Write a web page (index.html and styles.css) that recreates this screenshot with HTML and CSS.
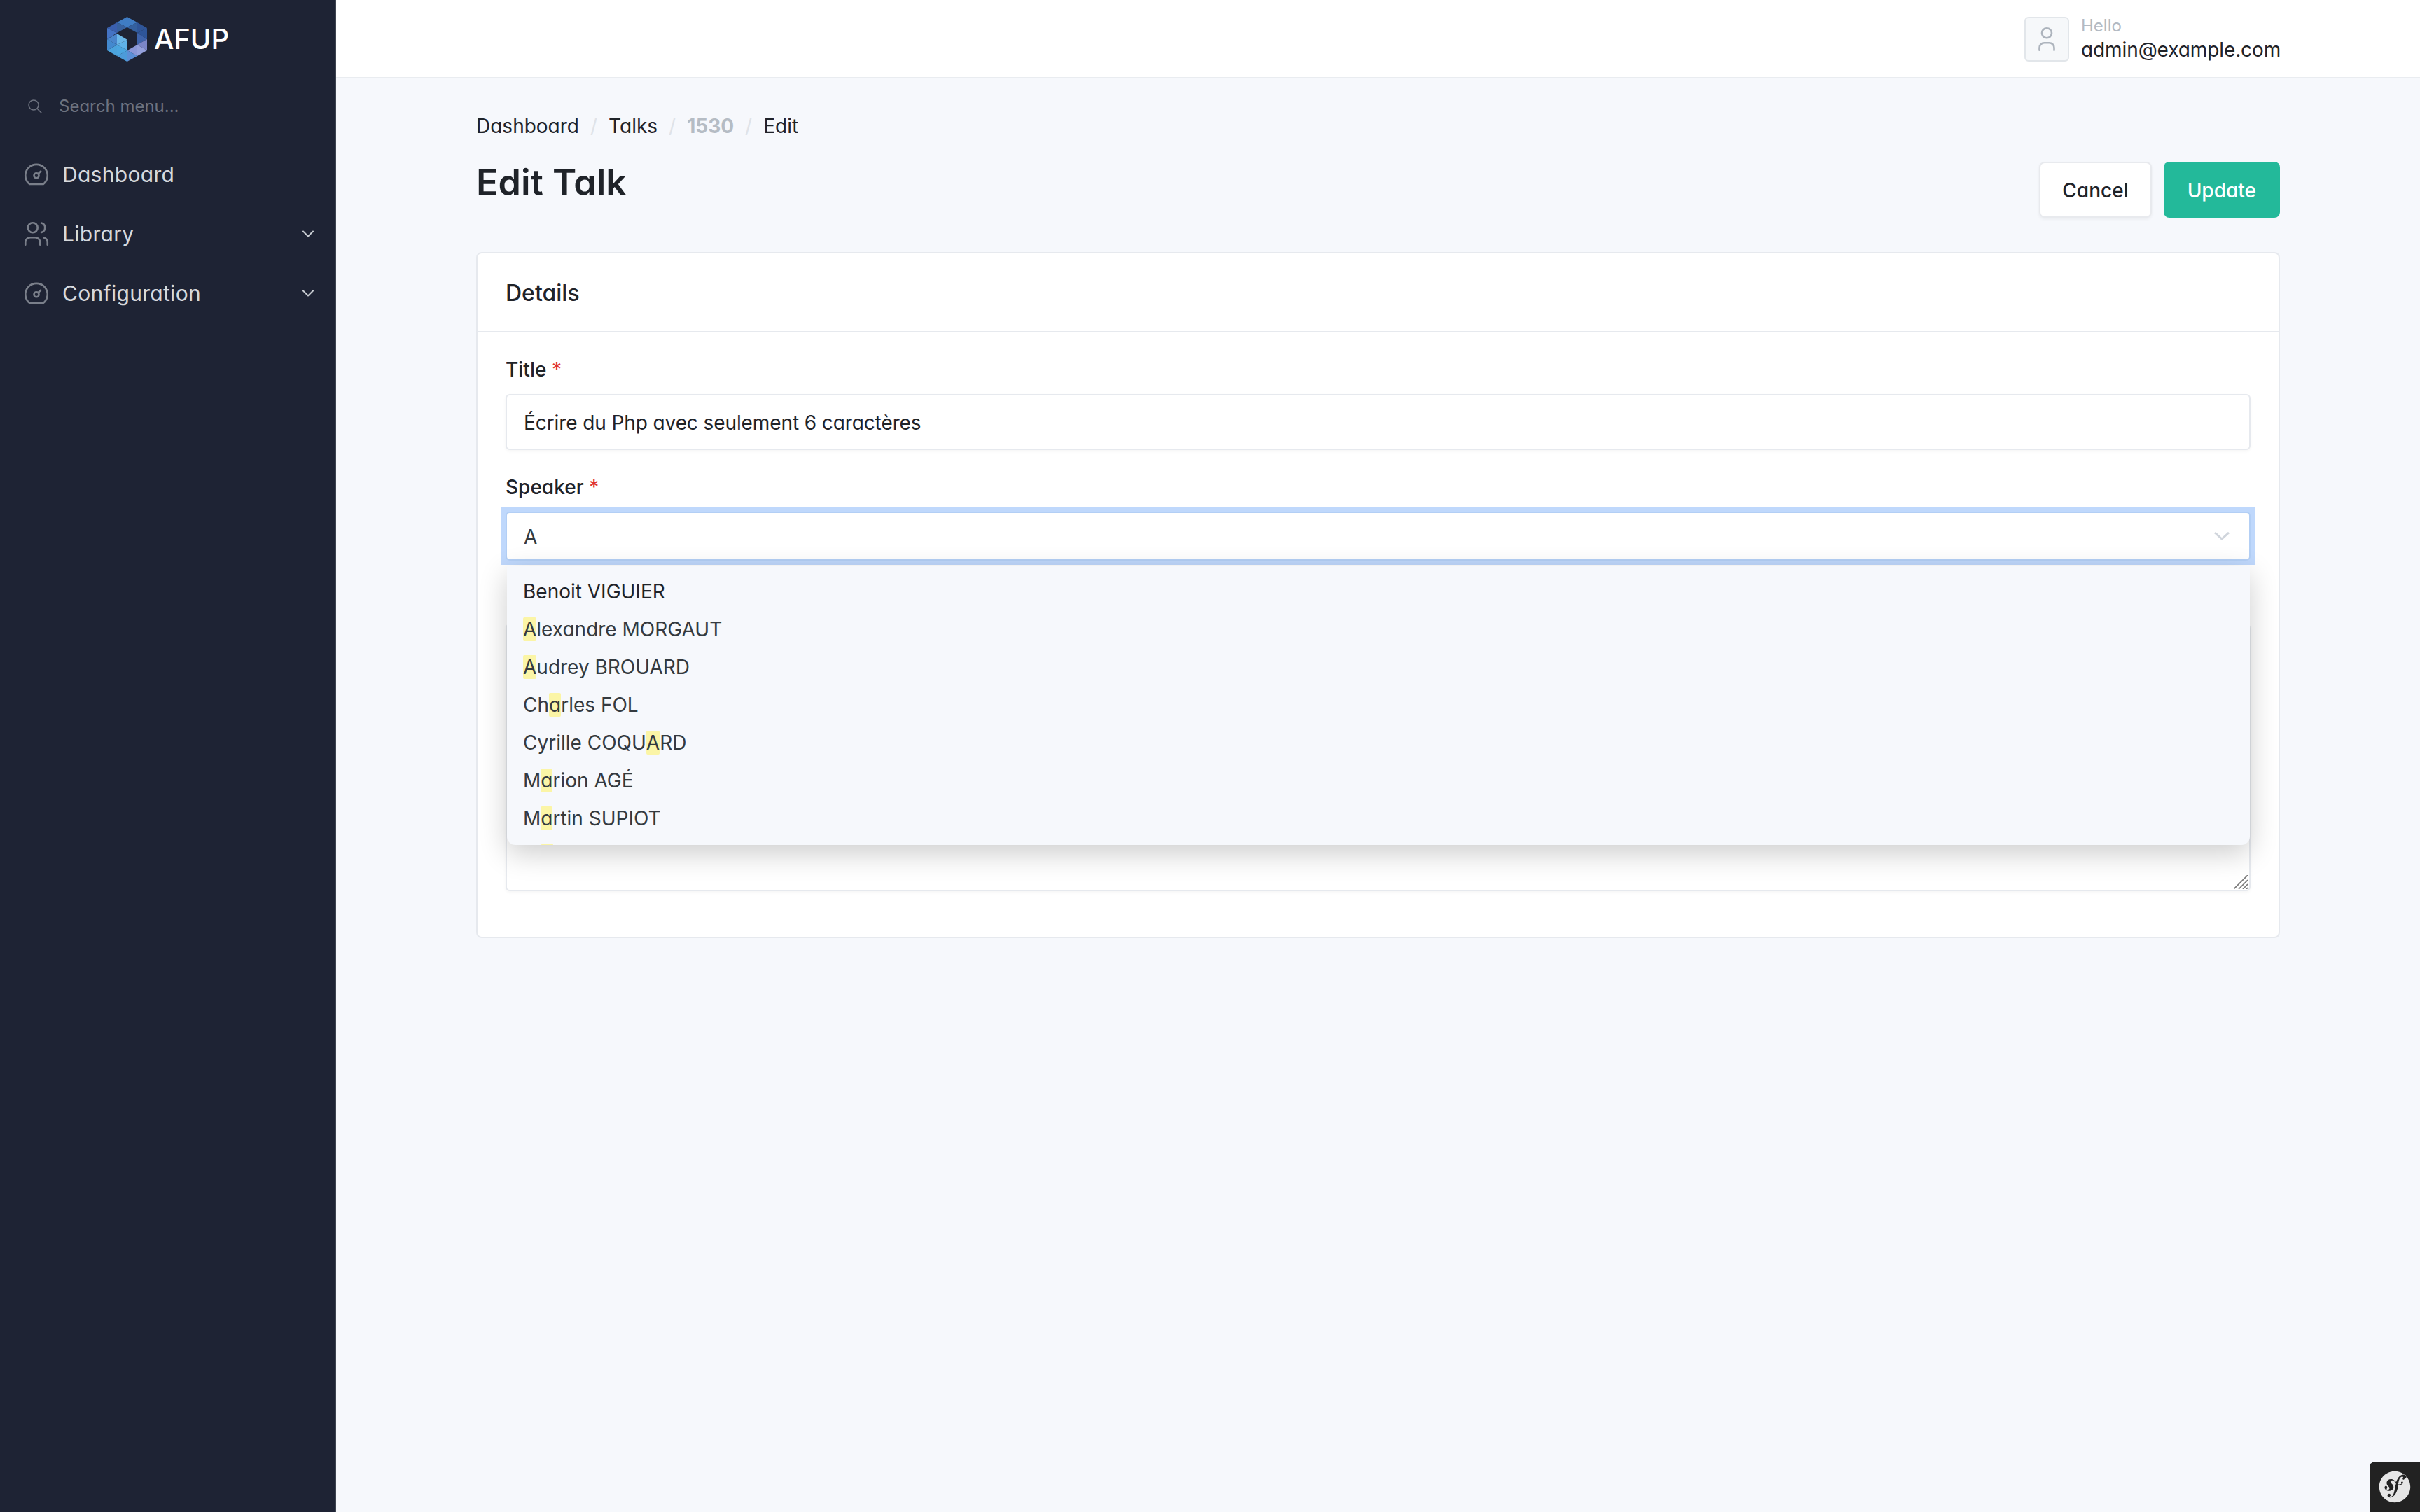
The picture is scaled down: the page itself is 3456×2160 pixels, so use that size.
FILE: index.html
```html
<!DOCTYPE html>
<html lang="en">
<head>
<meta charset="utf-8">
<title>Edit Talk</title>
<link rel="stylesheet" href="styles.css">
</head>
<body>
<aside class="sidebar">
  <div class="brand">
    <svg class="brand-logo" viewBox="0 0 57 64">
      <polygon fill="#3f7cc4" points="28.5,0 43,8 28.5,15 14,8"/>
      <polygon fill="#37619f" points="14,8 28.5,15 14,23"/>
      <polygon fill="#3a5fae" points="14,8 14,23 0,16"/>
      <polygon fill="#2f5598" points="43,8 57,16 43,23"/>
      <polygon fill="#34609f" points="43,8 43,23 28.5,15"/>
      <polygon fill="#2e5599" points="57,16 57,32 43,23"/>
      <polygon fill="#3e63ab" points="57,32 43,40 43,23"/>
      <polygon fill="#7b86c8" points="57,32 57,48 43,40"/>
      <polygon fill="#94a0dc" points="57,48 43,56 43,40"/>
      <polygon fill="#8a97d8" points="43,40 43,56 29,48"/>
      <polygon fill="#5b8fd6" points="43,56 28.5,64 29,48"/>
      <polygon fill="#4c9bd9" points="28.5,64 14,56 29,48"/>
      <polygon fill="#4ba6e0" points="14,56 29,48 14,40"/>
      <polygon fill="#5fb2e8" points="14,40 29,48 29,33"/>
      <polygon fill="#6ab6e8" points="14,40 29,33 14,24"/>
      <polygon fill="#4ba3dd" points="14,56 0,48 14,40"/>
      <polygon fill="#4389cf" points="0,48 0,32 14,40"/>
      <polygon fill="#4a86cc" points="0,32 14,24 14,40"/>
      <polygon fill="#4473c4" points="0,16 0,32 14,23"/>
    </svg>
    <span class="brand-name">AFUP</span>
  </div>
  <div class="menu-search">
    <svg class="search-icon" viewBox="0 0 24 24"><circle cx="10" cy="10" r="7"/><path d="M21 21l-6-6"/></svg>
    <span>Search menu...</span>
  </div>
  <nav class="menu">
    <a class="menu-item">
      <svg class="menu-icon" viewBox="0 0 24 24"><circle cx="12" cy="13" r="2"/><path d="M13.45 11.55L15.5 9.5"/><path d="M6.4 20a9 9 0 1 1 11.2 0z"/></svg>
      <span class="menu-label">Dashboard</span>
    </a>
    <a class="menu-item">
      <svg class="menu-icon" viewBox="0 0 24 24"><circle cx="9" cy="7" r="4"/><path d="M3 21v-2a4 4 0 0 1 4-4h4a4 4 0 0 1 4 4v2"/><path d="M16 3.13a4 4 0 0 1 0 7.75"/><path d="M21 21v-2a4 4 0 0 0-3-3.85"/></svg>
      <span class="menu-label">Library</span>
      <svg class="menu-chevron" viewBox="0 0 24 24"><path d="M6 9l6 6l6-6"/></svg>
    </a>
    <a class="menu-item">
      <svg class="menu-icon" viewBox="0 0 24 24"><circle cx="12" cy="13" r="2"/><path d="M13.45 11.55L15.5 9.5"/><path d="M6.4 20a9 9 0 1 1 11.2 0z"/></svg>
      <span class="menu-label">Configuration</span>
      <svg class="menu-chevron" viewBox="0 0 24 24"><path d="M6 9l6 6l6-6"/></svg>
    </a>
  </nav>
</aside>
<div class="main">
  <header class="topbar">
    <div class="user">
      <div class="avatar">
        <svg viewBox="0 0 24 24"><circle cx="12" cy="7" r="4"/><path d="M6 21v-2a4 4 0 0 1 4-4h4a4 4 0 0 1 4 4v2"/></svg>
      </div>
      <div class="user-text">
        <div class="user-hello">Hello</div>
        <div class="user-mail">admin@example.com</div>
      </div>
    </div>
  </header>
  <main class="content">
    <ol class="breadcrumb">
      <li>Dashboard</li>
      <li class="sep">/</li>
      <li>Talks</li>
      <li class="sep">/</li>
      <li class="crumb-muted">1530</li>
      <li class="sep">/</li>
      <li>Edit</li>
    </ol>
    <div class="page-head">
      <h1>Edit Talk</h1>
      <div class="actions">
        <button class="btn btn-cancel" type="button">Cancel</button>
        <button class="btn btn-update" type="button">Update</button>
      </div>
    </div>
    <section class="card">
      <div class="card-head">Details</div>
      <div class="card-body">
        <div class="field">
          <label class="label">Title <span class="req">*</span></label>
          <input class="input" type="text" value="Écrire du Php avec seulement 6 caractères">
        </div>
        <div class="field">
          <label class="label">Speaker <span class="req">*</span></label>
          <div class="select">
            <input class="select-input" type="text" value="A">
            <svg class="select-chevron" viewBox="0 0 22 12"><path d="M1 1l10 9l10-9"/></svg>
            <div class="dropdown">
              <div class="option option-active">Benoit VIGUIER</div>
              <div class="option"><mark>A</mark>lexandre MORGAUT</div>
              <div class="option"><mark>A</mark>udrey BROUARD</div>
              <div class="option">Ch<mark>a</mark>rles FOL</div>
              <div class="option">Cyrille COQU<mark>A</mark>RD</div>
              <div class="option">M<mark>a</mark>rion AGÉ</div>
              <div class="option">M<mark>a</mark>rtin SUPIOT</div>
              <div class="option-peek"></div>
            </div>
          </div>
        </div>
        <div class="field field-text">
          <textarea class="textarea"></textarea>
          <svg class="grip" viewBox="0 0 20 20"><path d="M0 20L20 0M7 20L20 7M13 20L20 13M18 20L20 18"/></svg>
        </div>
      </div>
    </section>
  </main>
</div>
<div class="sf-toolbar">
  <svg viewBox="0 0 24 24"><path fill-rule="evenodd" d="M12 .9C5.8.9.9 5.8.9 12s5 11.1 11.1 11.1 11.1-5 11.1-11.1S18.2.9 12 .9zm6.5 6c-.6 0-.9-.3-.9-.8 0-.2 0-.4.2-.6.1-.2.2-.2.2-.3 0-.3-.5-.4-.7-.4-1.8.1-2.3 2.5-2.7 4.4l-.2 1c1 .2 1.8 0 2.2-.3.6-.4-.2-.7-.1-1.2.1-.3.5-.5.7-.6.5 0 .7.5.7.9 0 .7-.9 1.7-2.7 1.6-.2 0-.4 0-.7-.1l-.3 1.9c-.3 1.6-.8 3.7-2.3 5.5-1.3 1.5-2.6 1.7-3.2 1.7-1.1 0-1.9-.6-1.9-1.4 0-.8.7-1.3 1.2-1.3.6 0 1.1.5 1.1 1s-.2.6-.4.7c-.1.1-.3.2-.3.4 0 .1.1.3.4.3.5 0 .8-.3 1.1-.5 1.2-.9 1.6-2.7 2.2-5.7l.1-.7c.2-1 .5-2.1.8-3.2-.8-.6-1.3-1.4-2.4-1.7-.8-.2-1.2 0-1.5.4-.3.4-.2.9.2 1.3l.7.7c.8.9 1.3 1.7 1.1 2.7-.3 1.6-2.1 2.8-4.3 2.1-1.9-.6-2.2-1.9-2-2.7.2-.6.7-.8 1.2-.6.5.2.7.8.6 1.3 0 .1 0 .1-.1.3s-.2.3-.3.4c-.1.3 0 .6.4.7.7.2 1.4-.2 1.6-.8.2-.6-.2-1-.3-1.2l-.8-.8c-.4-.4-1.2-1.5-.8-2.8.2-.5.5-1 .9-1.4 1-.7 2.1-.8 3.1-.5 1.3.4 1.9 1.2 2.7 1.9.5-1.3 1.1-2.6 2-3.6.8-.9 1.9-1.6 3.1-1.6 1.3 0 2.2.5 2.2 1.4 0 .4-.2 1.1-.9 1.1z"/></svg>
</div>
</body>
</html>
```

FILE: styles.css
```css
* { box-sizing: border-box; }
html, body { height: 100%; }
body {
  margin: 0;
  display: flex;
  min-height: 2160px;
  background: #f6f8fc;
  color: #1f2329;
  font-family: Inter, "Liberation Sans", sans-serif;
  font-feature-settings: "cv11";
  font-size: 28px;
  line-height: 42px;
  overflow: hidden;
}
input, button { font-feature-settings: "cv11"; }

/* Sidebar */
.sidebar {
  width: 480px;
  flex: none;
  background: #1e2334;
  border-right: 2px solid #3e4450;
}
.brand {
  height: 112px;
  display: flex;
  align-items: center;
  justify-content: center;
  gap: 10px;
  padding-left: 2px;
}
.brand-logo { width: 57px; height: 64px; display: block; }
.brand-name { color: #fff; font-size: 40px; font-weight: 500; line-height: 1; font-feature-settings: normal; }
.menu-search {
  height: 80px;
  display: flex;
  align-items: center;
  gap: 22px;
  padding-left: 38px;
  color: #6d727f;
  font-size: 24px;
}
.search-icon { width: 24px; height: 24px; fill: none; stroke: #6d727f; stroke-width: 1.5; stroke-linecap: round; }
.menu { padding-top: 14px; }
.menu-item {
  height: 85px;
  display: flex;
  align-items: center;
  gap: 16px;
  padding: 0 24px 0 31px;
  color: #d6d9dd;
  font-size: 30px;
  letter-spacing: .3px;
}
.menu-icon { width: 42px; height: 42px; flex: none; fill: none; stroke: #7a7f8a; stroke-width: 1.5; stroke-linecap: round; stroke-linejoin: round; }
.menu-label { flex: 1; }
.menu-chevron { width: 28px; height: 28px; flex: none; fill: none; stroke: #c8ccd2; stroke-width: 1.75; stroke-linecap: round; stroke-linejoin: round; }

/* Top bar */
.main { flex: 1; min-width: 0; }
.topbar {
  height: 112px;
  background: #fff;
  border-bottom: 2px solid #e9ecf0;
  display: flex;
  justify-content: flex-end;
  padding: 24px 200px 0 0;
}
.user { display: flex; gap: 17px; width: 365px; align-items: flex-start; }
.avatar {
  width: 64px;
  height: 64px;
  flex: none;
  background: #f6f8fa;
  border: 2px solid #e2e6ea;
  border-radius: 6px;
  display: flex;
  align-items: center;
  justify-content: center;
}
.avatar svg { width: 42px; height: 42px; fill: none; stroke: #adb4bd; stroke-width: 1.5; stroke-linecap: round; }
.user-hello { color: #b3bac3; font-size: 24px; line-height: 28px; margin-top: -1px; }
.user-mail { font-size: 28px; line-height: 40px; letter-spacing: -.1px; white-space: nowrap; }

/* Page */
.content { padding: 47px 200px 0; }
.breadcrumb { list-style: none; margin: 0; padding: 0; display: flex; gap: 16px; }
.breadcrumb .sep { color: #dfe3e8; }
.crumb-muted { color: #b5bcc4; font-weight: 700; }
.page-head {
  display: flex;
  justify-content: space-between;
  align-items: flex-start;
  margin: 30px 0 49px;
}
h1 { margin: 0; font-size: 52px; line-height: 60px; font-weight: 600; }
.actions { display: flex; gap: 17px; }
.btn {
  height: 80px;
  padding: 2px 31px 0;
  border-radius: 8px;
  font: 500 28px/1 Inter, "Liberation Sans", sans-serif;
  font-feature-settings: "cv11";
}
.btn-cancel {
  background: #fff;
  color: #1f2329;
  border: 2px solid #e8eaee;
  box-shadow: 0 2px 4px rgba(0, 0, 0, .06);
}
.btn-update { padding: 2px 34px 0; background: #23b99a; color: #fff; border: 0; }

/* Card */
.card { background: #fff; border: 2px solid #e6e9ee; border-radius: 8px; }
.card-head {
  height: 113px;
  display: flex;
  align-items: center;
  padding: 3px 40px 0;
  border-bottom: 2px solid #e6e9ee;
  font-size: 32px;
  font-weight: 500;
}
.card-body { padding: 30px 40px 65px; }
.field { margin-bottom: 30px; position: relative; }
.field-text { margin: 90px 0 0; }
.label { display: block; margin-bottom: 14px; padding-top: 2px; font-weight: 500; }
.req { color: #e03131; }
.input {
  display: block;
  width: 100%;
  height: 80px;
  padding: 2px 24px 0;
  background: #fff;
  border: 2px solid #e6e9ee;
  border-radius: 6px;
  box-shadow: 0 2px 4px rgba(0, 0, 0, .04);
  color: #1f2329;
  font: 400 28px Inter, "Liberation Sans", sans-serif;
  font-feature-settings: "cv11";
  letter-spacing: -.1px;
  outline: none;
}

/* Select with open dropdown */
.select { position: relative; height: 70px; background: #bfd8fc; box-shadow: 0 0 0 6px #bfd8fc; }
.select-input {
  display: block;
  width: 100%;
  height: 70px;
  padding: 2px 24px 0;
  background: #fff;
  border: 2px solid #b3cff5;
  border-radius: 6px;
  color: #343a40;
  font: 400 28px Inter, "Liberation Sans", sans-serif;
  font-feature-settings: "cv11";
  outline: none;
}
.select-chevron {
  position: absolute;
  top: 29px;
  right: 30px;
  width: 22px;
  height: 12px;
  fill: none;
  stroke: #d0d5dc;
  stroke-width: 3;
}
.dropdown {
  position: absolute;
  z-index: 5;
  top: 77px;
  left: 2px;
  right: 1px;
  height: 399px;
  padding-top: 10px;
  overflow: hidden;
  background: #f6f8fc;
  border-radius: 0 0 12px 12px;
  box-shadow: 0 12px 40px rgba(0, 0, 0, .2);
  color: #343a40;
}
.option { height: 54px; padding: 6px 23px; line-height: 42px; white-space: nowrap; }
.option-active { color: #1f2329; }
.option-peek { width: 17px; height: 34px; margin: 9px 0 0 49px; background: #fbf5a6; border-radius: 2px; }
mark { display: inline-block; height: 34px; line-height: 34px; vertical-align: baseline; background: #fbf5a6; color: inherit; border-radius: 2px; }

.textarea {
  display: block;
  width: 100%;
  height: 382px;
  background: #fff;
  border: 2px solid #e6e9ee;
  border-radius: 6px;
  box-shadow: 0 2px 4px rgba(0, 0, 0, .04);
  resize: none;
  outline: none;
}
.grip {
  position: absolute;
  right: 4px;
  bottom: 3px;
  width: 20px;
  height: 20px;
  fill: none;
  stroke: #777;
  stroke-width: 1.6;
}

/* Symfony toolbar */
.sf-toolbar {
  position: fixed;
  right: 0;
  bottom: 0;
  width: 72px;
  height: 72px;
  background: #222;
  border-top-left-radius: 8px;
  display: flex;
  align-items: center;
  justify-content: center;
}
.sf-toolbar svg { width: 48px; height: 48px; fill: #e6e6e6; }
```
